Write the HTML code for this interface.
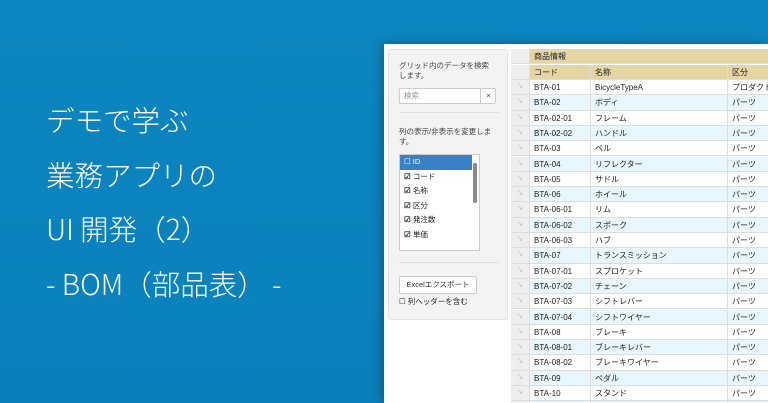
<!DOCTYPE html>
<html style="width:768px;height:403px;overflow:hidden"><head><meta charset="utf-8"><style>
*{margin:0;padding:0;box-sizing:border-box}
body{width:768px;height:403px;overflow:hidden;background:linear-gradient(180deg,#0c86c0,#0a80bb);font-family:"Liberation Sans","Noto Sans CJK JP",sans-serif;position:relative}
.t{position:absolute;left:46px;color:#fff;font-size:28.5px;line-height:30px;white-space:nowrap;font-family:"Noto Sans CJK JP","Liberation Sans",sans-serif;font-weight:300}
.panel{position:absolute;left:384px;top:44px;width:384px;height:359px;background:#fff;box-shadow:-2px 0 10px rgba(0,0,0,.3)}
.side{position:absolute;left:388px;top:49px;width:120px;height:271px;background:#f3f3f3;border:1px solid #e2e2e2;border-radius:3px;font-size:7.5px;color:#444}
.grid{position:absolute;left:511px;top:49px;width:257px;height:354px;overflow:hidden;font-size:8px;color:#222}
.row{position:absolute;left:0;height:15.3px;width:260px;border-bottom:1px solid #ddd}
.row div{position:absolute;top:0;height:100%;line-height:15px;padding-left:4px;border-right:1px solid #ddd;white-space:nowrap;overflow:hidden}
.c0{left:0;width:19px;background:#eee;color:#aaa;font-size:6px;text-align:center;padding:0!important}
.c1{left:19px;width:61px}.c2{left:80px;width:137px}.c3{left:217px;width:60px}
.alt div{background:#e8f6fd}
.alt .c0{background:#eee}
.hd div{background:#e4d6a4}
.hd .c0{background:#eee}
.cb{font-weight:bold}
</style></head><body>
<div class="t" style="top:105px">デモで学ぶ</div>
<div class="t" style="top:160px">業務アプリの</div>
<div class="t" style="top:214px">UI 開発（2）</div>
<div class="t" style="top:269px">- BOM（部品表） -</div>
<div class="panel"></div>
<div class="side">
<div style="position:absolute;left:10px;top:11px;line-height:10px">グリッド内のデータを検索<br>します。</div>
<div style="position:absolute;left:10px;top:38px;width:97px;height:16px;background:#fff;border:1px solid #ccc;border-radius:2px;color:#999;line-height:14px;padding-left:4px">検索<span style="position:absolute;left:80px;top:0;width:16px;height:14px;border-left:1px solid #ccc;text-align:center;color:#333">×</span></div>
<div style="position:absolute;left:10px;top:62px;width:100px;border-top:1px solid #e0e0e0"></div>
<div style="position:absolute;left:10px;top:77px;line-height:10px">列の表示/非表示を変更しま<br>す。</div>
<div style="position:absolute;left:10px;top:104px;width:81px;height:97px;background:#fff;border:1px solid #ccc;overflow:hidden;line-height:14.5px;color:#222">
<div style="background:#3a80c6;color:#fff;padding-left:4px;width:72px">☐ ID</div>
<div style="padding-left:4px"><span class="cb">☑</span> コード</div><div style="padding-left:4px"><span class="cb">☑</span> 名称</div><div style="padding-left:4px"><span class="cb">☑</span> 区分</div><div style="padding-left:4px"><span class="cb">☑</span> 発注数</div><div style="padding-left:4px"><span class="cb">☑</span> 単価</div>
<div style="position:absolute;right:2px;top:8px;width:4px;height:40px;background:#888;border-radius:2px"></div>
</div>
<div style="position:absolute;left:10px;top:212px;width:100px;border-top:1px solid #e0e0e0"></div>
<div style="position:absolute;left:10px;top:226px;width:78px;height:18px;background:#fff;border:1px solid #ccc;border-radius:2px;line-height:16px;text-align:center;color:#333">Excelエクスポート</div>
<div style="position:absolute;left:10px;top:246px;color:#222">☐ 列ヘッダーを含む</div>
</div>
<div class="grid">
<div class="row hd" style="top:0"><div class="c0"></div><div class="c1" style="width:260px">商品情報</div></div>
<div class="row hd" style="top:15.5px"><div class="c0"></div><div class="c1">コード</div><div class="c2">名称</div><div class="c3">区分</div></div>
<div class="row" style="top:31px"><div class="c0">↘</div><div class="c1">BTA-01</div><div class="c2">BicycleTypeA</div><div class="c3">プロダクト</div></div>
<div class="row alt" style="top:46.3px"><div class="c0">↘</div><div class="c1">BTA-02</div><div class="c2">ボディ</div><div class="c3">パーツ</div></div>
<div class="row" style="top:61.6px"><div class="c0">↘</div><div class="c1">BTA-02-01</div><div class="c2">フレーム</div><div class="c3">パーツ</div></div>
<div class="row alt" style="top:76.9px"><div class="c0">↘</div><div class="c1">BTA-02-02</div><div class="c2">ハンドル</div><div class="c3">パーツ</div></div>
<div class="row" style="top:92.2px"><div class="c0">↘</div><div class="c1">BTA-03</div><div class="c2">ベル</div><div class="c3">パーツ</div></div>
<div class="row alt" style="top:107.5px"><div class="c0">↘</div><div class="c1">BTA-04</div><div class="c2">リフレクター</div><div class="c3">パーツ</div></div>
<div class="row" style="top:122.8px"><div class="c0">↘</div><div class="c1">BTA-05</div><div class="c2">サドル</div><div class="c3">パーツ</div></div>
<div class="row alt" style="top:138.1px"><div class="c0">↘</div><div class="c1">BTA-06</div><div class="c2">ホイール</div><div class="c3">パーツ</div></div>
<div class="row" style="top:153.4px"><div class="c0">↘</div><div class="c1">BTA-06-01</div><div class="c2">リム</div><div class="c3">パーツ</div></div>
<div class="row alt" style="top:168.7px"><div class="c0">↘</div><div class="c1">BTA-06-02</div><div class="c2">スポーク</div><div class="c3">パーツ</div></div>
<div class="row" style="top:184px"><div class="c0">↘</div><div class="c1">BTA-06-03</div><div class="c2">ハブ</div><div class="c3">パーツ</div></div>
<div class="row alt" style="top:199.3px"><div class="c0">↘</div><div class="c1">BTA-07</div><div class="c2">トランスミッション</div><div class="c3">パーツ</div></div>
<div class="row" style="top:214.6px"><div class="c0">↘</div><div class="c1">BTA-07-01</div><div class="c2">スプロケット</div><div class="c3">パーツ</div></div>
<div class="row alt" style="top:229.9px"><div class="c0">↘</div><div class="c1">BTA-07-02</div><div class="c2">チェーン</div><div class="c3">パーツ</div></div>
<div class="row" style="top:245.2px"><div class="c0">↘</div><div class="c1">BTA-07-03</div><div class="c2">シフトレバー</div><div class="c3">パーツ</div></div>
<div class="row alt" style="top:260.5px"><div class="c0">↘</div><div class="c1">BTA-07-04</div><div class="c2">シフトワイヤー</div><div class="c3">パーツ</div></div>
<div class="row" style="top:275.8px"><div class="c0">↘</div><div class="c1">BTA-08</div><div class="c2">ブレーキ</div><div class="c3">パーツ</div></div>
<div class="row alt" style="top:291.1px"><div class="c0">↘</div><div class="c1">BTA-08-01</div><div class="c2">ブレーキレバー</div><div class="c3">パーツ</div></div>
<div class="row" style="top:306.4px"><div class="c0">↘</div><div class="c1">BTA-08-02</div><div class="c2">ブレーキワイヤー</div><div class="c3">パーツ</div></div>
<div class="row alt" style="top:321.7px"><div class="c0">↘</div><div class="c1">BTA-09</div><div class="c2">ペダル</div><div class="c3">パーツ</div></div>
<div class="row" style="top:337px"><div class="c0">↘</div><div class="c1">BTA-10</div><div class="c2">スタンド</div><div class="c3">パーツ</div></div>
<div class="row alt" style="top:352.3px"><div class="c0"></div><div class="c1"></div><div class="c2"></div><div class="c3"></div></div>
</div>
</body></html>
